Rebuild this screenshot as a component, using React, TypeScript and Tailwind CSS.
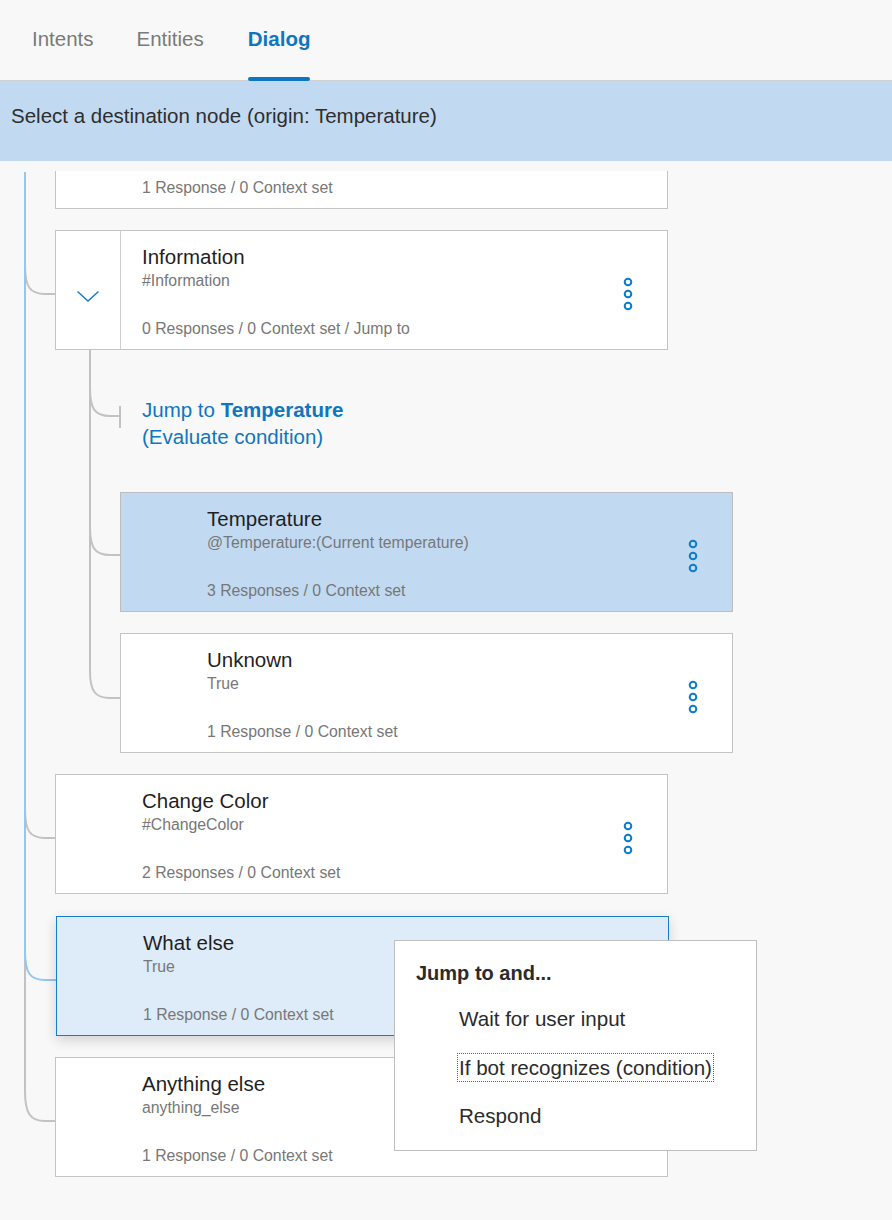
import React from 'react'

type NodeProps = {
  title: string
  sub: string
  footer: string
  variant?: 'plain' | 'target' | 'active'
  expanded?: boolean
  dots?: boolean
  className?: string
}

const Dots = () => (
  <svg width="10" height="34" viewBox="0 0 10 34" className="mt-[7px]">
    <circle cx="5" cy="5" r="3.3" fill="none" stroke="#0b7bcc" strokeWidth="2" />
    <circle cx="5" cy="17" r="3.3" fill="none" stroke="#0b7bcc" strokeWidth="2" />
    <circle cx="5" cy="29" r="3.3" fill="none" stroke="#0b7bcc" strokeWidth="2" />
  </svg>
)

const Chevron = () => (
  <svg width="24" height="12" viewBox="0 0 24 12" className="mt-[12px]">
    <path d="M1.5 1.5 L12 11 L22.5 1.5" fill="none" stroke="#1a7cc8" strokeWidth="1.5" />
  </svg>
)

const DialogNode = ({ title, sub, footer, variant = 'plain', expanded, dots = true, className = '' }: NodeProps) => {
  const look =
    variant === 'target'
      ? 'bg-[#c1daf2] border-[#bdbdbd]'
      : variant === 'active'
      ? 'bg-[#deebf8] border-[#1a7cc8] shadow-[0_4px_12px_rgba(0,0,0,0.16)]'
      : 'bg-white border-[#c4c4c4]'
  return (
    <div className={`relative flex h-[120px] w-[613px] border ${look} ${className}`}>
      {expanded ? (
        <div className="flex w-[65px] shrink-0 items-center justify-center border-r border-[#cfcfcf]">
          <Chevron />
        </div>
      ) : (
        <div className="w-[86px] shrink-0" />
      )}
      <div className={`flex flex-1 flex-col pt-[14px] pb-[11px] ${expanded ? 'pl-[21px]' : ''}`}>
        <div className="text-[20.5px] leading-[24px] text-[#1f1f1f]">{title}</div>
        <div className="mt-[3px] text-[15.8px] leading-[18px] text-[#777]">{sub}</div>
        <div className="mt-auto text-[15.8px] leading-[18px] text-[#777]">{footer}</div>
      </div>
      {dots && (
        <div className="flex items-center pr-[34px]">
          <Dots />
        </div>
      )}
    </div>
  )
}

const Connectors = () => (
  <svg
    className="pointer-events-none absolute left-0 top-0"
    width="892"
    height="1049"
    viewBox="0 171 892 1049"
    fill="none"
  >
    {/* main branch */}
    <g stroke="#c2c2c2" strokeWidth="2">
      <path d="M25 172 V1091 C25 1113 30 1121 45 1121 H56" />
      <path d="M25 265 C25 287 30 294 45 294 H56" />
      <path d="M25 809 C25 831 30 838 45 838 H56" />
    </g>
    <path d="M25 172 V951 C25 973 30 980 45 980 H57" stroke="#94c6f2" strokeWidth="2" />
    {/* children of Information */}
    <g stroke="#c2c2c2" strokeWidth="2">
      <path d="M90 349 V671 C90 691 95 698 110 698 H121" />
      <path d="M90 388 C90 409 95 416 110 416 H120" />
      <path d="M120 406 V428" />
      <path d="M90 527 C90 548 95 555 110 555 H121" />
    </g>
  </svg>
)

const JumpMenu = () => (
  <div className="absolute left-[394px] top-[769px] h-[211px] w-[363px] border border-[#bfbfbf] bg-white pl-[21px] pt-[20px] text-[#2b2b2b]">
    <div className="text-[20px] font-bold leading-[24px]">Jump to and...</div>
    <div className="mt-[20px] flex flex-col items-start gap-[20px] pl-[41px] text-[20.6px]">
      <div className="h-[28px] px-[2px] leading-[28px]">Wait for user input</div>
      <div className="h-[29px] border border-dotted border-[#666] px-[1px] leading-[27px]">If bot recognizes (condition)</div>
      <div className="h-[28px] px-[2px] leading-[28px]">Respond</div>
    </div>
  </div>
)

export default function App() {
  return (
    <div className="h-[1220px] w-[892px] overflow-hidden bg-[#f8f8f8] font-['Liberation_Sans',Arial,sans-serif]">
      {/* tabs */}
      <div className="flex h-[81px] border-b border-[#d0d0d0] pl-[32px] text-[20.5px]">
        <div className="flex items-center pb-[2px] text-[#7a7a7a]">Intents</div>
        <div className="ml-[43px] flex items-center pb-[2px] text-[#7a7a7a]">Entities</div>
        <div className="relative ml-[44px] flex items-center pb-[2px] font-bold text-[#0e76c0]">
          Dialog
          <div className="absolute bottom-[-1px] left-0 right-0 h-[4px] rounded-full bg-[#0e76c0]" />
        </div>
      </div>
      {/* banner */}
      <div className="h-[80px] bg-[#c1daf2] pl-[11px] pt-[23px] text-[20.5px] leading-[24px] text-[#2e2e2e]">
        Select a destination node (origin: Temperature)
      </div>
      {/* tree */}
      <div className="relative mt-[10px] h-[1049px] overflow-hidden">
        <Connectors />
        <div className="flex flex-col pl-[55px]">
          <DialogNode className="-mt-[82px]" title="" sub="" footer="1 Response / 0 Context set" dots={false} />
          <DialogNode
            className="mt-[21px]"
            title="Information"
            sub="#Information"
            footer="0 Responses / 0 Context set / Jump to"
            expanded
          />
          <div className="relative ml-[87px] mt-[46px] text-[20.5px] leading-[27px] text-[#0e76c0]">
            <div>
              Jump to <span className="font-bold">Temperature</span>
            </div>
            <div>(Evaluate condition)</div>
          </div>
          <DialogNode
            className="ml-[65px] mt-[42px]"
            title="Temperature"
            sub="@Temperature:(Current temperature)"
            footer="3 Responses / 0 Context set"
            variant="target"
          />
          <DialogNode className="ml-[65px] mt-[21px]" title="Unknown" sub="True" footer="1 Response / 0 Context set" />
          <DialogNode className="mt-[21px]" title="Change Color" sub="#ChangeColor" footer="2 Responses / 0 Context set" />
          <DialogNode
            className="ml-[1px] mt-[22px] w-[612px]"
            title="What else"
            sub="True"
            footer="1 Response / 0 Context set"
            variant="active"
          />
          <DialogNode className="mt-[21px]" title="Anything else" sub="anything_else" footer="1 Response / 0 Context set" />
        </div>
        <JumpMenu />
      </div>
    </div>
  )
}
